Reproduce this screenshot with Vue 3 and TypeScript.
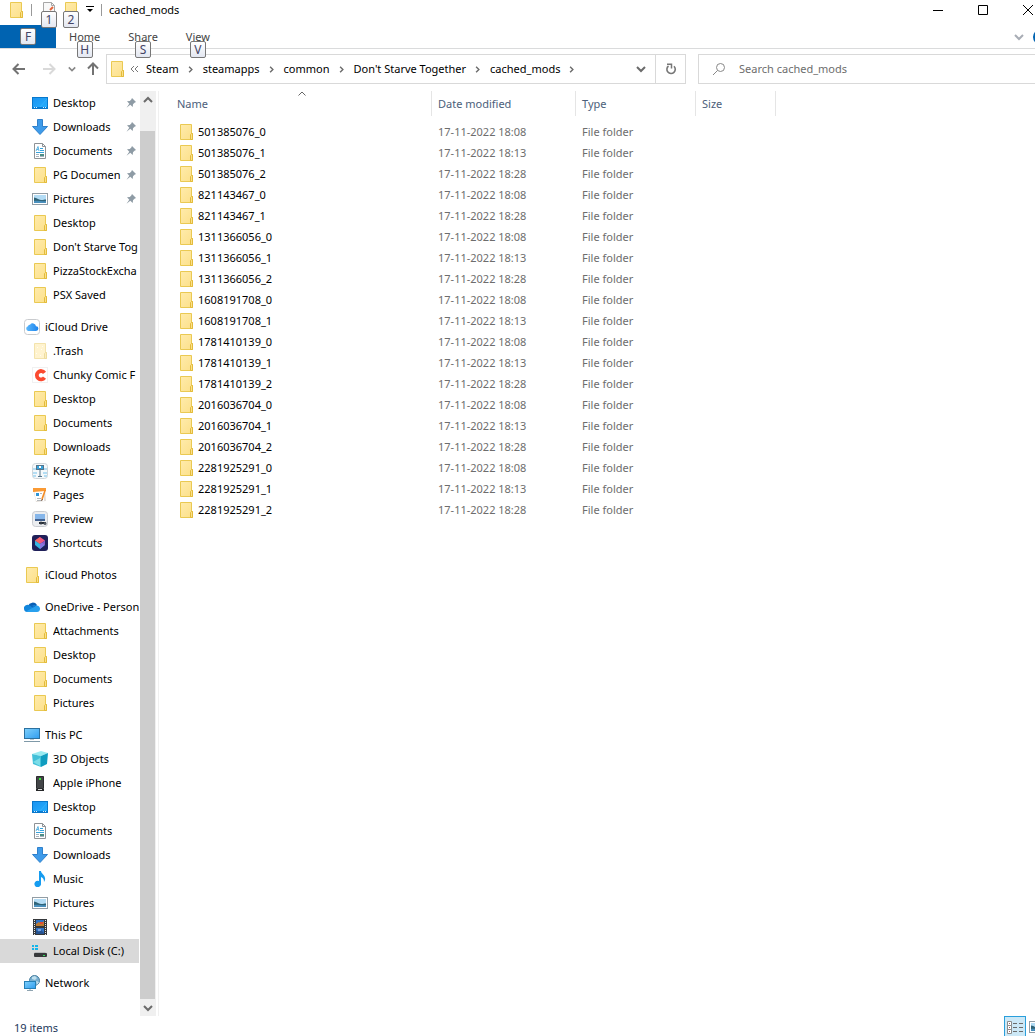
<script setup lang="ts">
interface TreeItem {
  label: string
  icon: string
  root?: boolean
  pinned?: boolean
  selected?: boolean
}

const groups: TreeItem[][] = [
  [
    { label: 'Desktop', icon: 'desktop', pinned: true },
    { label: 'Downloads', icon: 'downloads', pinned: true },
    { label: 'Documents', icon: 'documents', pinned: true },
    { label: 'PG Documen', icon: 'folder', pinned: true },
    { label: 'Pictures', icon: 'pictures', pinned: true },
    { label: 'Desktop', icon: 'folder' },
    { label: "Don't Starve Tog", icon: 'folder' },
    { label: 'PizzaStockExcha', icon: 'folder' },
    { label: 'PSX Saved', icon: 'folder' },
  ],
  [
    { label: 'iCloud Drive', icon: 'icloud', root: true },
    { label: '.Trash', icon: 'trash' },
    { label: 'Chunky Comic F', icon: 'chunky' },
    { label: 'Desktop', icon: 'folder' },
    { label: 'Documents', icon: 'folder' },
    { label: 'Downloads', icon: 'folder' },
    { label: 'Keynote', icon: 'keynote' },
    { label: 'Pages', icon: 'pages' },
    { label: 'Preview', icon: 'preview' },
    { label: 'Shortcuts', icon: 'shortcuts' },
  ],
  [{ label: 'iCloud Photos', icon: 'folder', root: true }],
  [
    { label: 'OneDrive - Person', icon: 'onedrive', root: true },
    { label: 'Attachments', icon: 'folder' },
    { label: 'Desktop', icon: 'folder' },
    { label: 'Documents', icon: 'folder' },
    { label: 'Pictures', icon: 'folder' },
  ],
  [
    { label: 'This PC', icon: 'pc', root: true },
    { label: '3D Objects', icon: 'objects' },
    { label: 'Apple iPhone', icon: 'phone' },
    { label: 'Desktop', icon: 'desktop' },
    { label: 'Documents', icon: 'documents' },
    { label: 'Downloads', icon: 'downloads' },
    { label: 'Music', icon: 'music' },
    { label: 'Pictures', icon: 'pictures' },
    { label: 'Videos', icon: 'videos' },
    { label: 'Local Disk (C:)', icon: 'disk', selected: true },
  ],
  [{ label: 'Network', icon: 'network', root: true }],
]

const tabs = [
  { label: 'Home', key: 'H' },
  { label: 'Share', key: 'S' },
  { label: 'View', key: 'V' },
]

const crumbs = ['Steam', 'steamapps', 'common', "Don't Starve Together", 'cached_mods']

const times = ['18:08', '18:13', '18:28']
const mods: [string, number[]][] = [
  ['501385076', [0, 1, 2]],
  ['821143467', [0, 2]],
  ['1311366056', [0, 1, 2]],
  ['1608191708', [0, 1]],
  ['1781410139', [0, 1, 2]],
  ['2016036704', [0, 1, 2]],
  ['2281925291', [0, 1, 2]],
]
const files = mods.flatMap(([id, slots]) =>
  slots.map((slot, n) => ({ name: `${id}_${n}`, modified: `17-11-2022 ${times[slot]}` })),
)
</script>

<template>
  <div class="explorer">
    <svg class="sprite" aria-hidden="true">
      <defs>
        <linearGradient id="gFolder" x1="0" y1="0" x2="1" y2="1">
          <stop offset="0" stop-color="#ffebab" /><stop offset="1" stop-color="#fce08a" />
        </linearGradient>
        <linearGradient id="gScreen" x1="0" y1="0" x2="1" y2="1">
          <stop offset="0" stop-color="#1a93f0" /><stop offset="1" stop-color="#27b0ff" />
        </linearGradient>
        <linearGradient id="gCloud" x1="0" y1="0" x2="1" y2="0">
          <stop offset="0" stop-color="#5cb8fb" /><stop offset="1" stop-color="#1b83ee" />
        </linearGradient>
        <linearGradient id="gPc" x1="0" y1="0" x2="1" y2="1">
          <stop offset="0" stop-color="#7fd0fb" /><stop offset="1" stop-color="#2f9df0" />
        </linearGradient>
      </defs>
      <symbol id="folder" viewBox="0 0 16 16">
        <path d="M2.500.5h11v9h1v6h-12z" fill="url(#gFolder)" stroke="#eac952" />
        <path d="M12.500 15.500v-5l1-1h1v6z" fill="#fbe08a" stroke="#e3bb3b" />
      </symbol>
      <symbol id="trash" viewBox="0 0 16 16">
        <path d="M2.500.5h11v9h1v6h-12z" fill="#fff3cf" stroke="#f3e3ac" />
        <path d="M12.500 15.500v-5l1-1h1v6z" fill="#fcedbf" stroke="#eddc9f" />
        <path d="M5 4.500h1M9 6.500h1M4 10.500h1M8 12.500h1M10 3.500h1" stroke="#fffdf0" />
      </symbol>
      <symbol id="desktop" viewBox="0 0 16 16">
        <rect x=".5" y="2.500" width="15" height="11" fill="url(#gScreen)" stroke="#0878cc" />
        <path d="M1 12.500h14" stroke="#077bd3" />
        <path d="M2 12.500h1M4 12.500h1M11 12.500h1M13 12.500h1" stroke="#d9f1ff" />
        <path d="M8 12l7-8" stroke="#52c1ff" opacity=".4" />
      </symbol>
      <symbol id="downloads" viewBox="0 0 16 16">
        <path d="M5.500.5h5v7h5L8 15.500.5 7.500h5z" fill="#3e9bea" stroke="#2f80cb" />
      </symbol>
      <symbol id="documents" viewBox="0 0 16 16">
        <path d="M2.500.5h8l3 3v12h-11z" fill="#fff" stroke="#8e9296" />
        <path d="M10.500.5v3h3" fill="none" stroke="#8e9296" />
        <path d="M8 5.500h3M8 7.500h4M4 9.500h8" stroke="#38a3dc" />
        <path d="M4 8l2-4.500L7 8M4.500 6.500h2" stroke="#5db4e2" fill="none" />
        <path d="M4 11.500h3M4 13.500h3M8 13.500h4" stroke="#a4b3bf" />
        <rect x="8" y="11" width="4" height="2" fill="#4e8d84" />
      </symbol>
      <symbol id="pictures" viewBox="0 0 16 16">
        <rect x=".5" y="2.500" width="15" height="11" fill="#fff" stroke="#929da5" />
        <rect x="2" y="4" width="12" height="8" fill="#b3dcf5" />
        <path d="M2 6.500c3 0 4 2.500 7 2.500s3-.5 5-.5V12H2z" fill="#2f6377" />
        <path d="M2 10c4-1 8 1 12 0v2H2z" fill="#4a90bd" />
      </symbol>
      <symbol id="icloud" viewBox="0 0 16 16">
        <rect x=".5" y=".5" width="15" height="15" rx="3" fill="#fff" stroke="#c9cbce" />
        <path d="M4 12a2.500 2.500 0 0 1 0-4.800A2 2 0 0 1 6 5.800 3.300 3.300 0 0 1 12 7.200 2.400 2.400 0 0 1 12 12z" fill="url(#gCloud)" />
      </symbol>
      <symbol id="chunky" viewBox="0 0 16 16">
        <rect x=".5" y=".5" width="15" height="15" fill="#fff" stroke="#f1f1f1" />
        <path d="M12.500 5.800A4.200 4.200 0 1 0 12.500 10.600" fill="none" stroke="#fb4a30" stroke-width="3.800" />
      </symbol>
      <symbol id="keynote" viewBox="0 0 16 16">
        <rect x=".5" y=".5" width="15" height="15" rx="3" fill="#f5f9fb" stroke="#cfd5d9" />
        <path d="M1 6h3M1 10h4M1 13h3M12 6h3M11 10h4M12 13h3" stroke="#b4ddf3" stroke-width="2" />
        <rect x="4.500" y="2.500" width="7" height="4" fill="#35a4de" stroke="#57748a" />
        <path d="M8 3v10M6 13.500h4" stroke="#54748a" />
        <rect x="7" y="3" width="2" height="2" fill="#fff" />
      </symbol>
      <symbol id="pages" viewBox="0 0 16 16">
        <path d="M1 2h12l1 12-10 1z" fill="#e3ded9" />
        <path d="M2 3h10v11H4z" fill="#fff" />
        <path d="M1 1h13v3L1 5z" fill="#fa9a34" />
        <path d="M4 6h3v3H4z" fill="#3095d5" />
        <path d="M5 11.500h4M5 13.500h4M8 6.500h2" stroke="#b3b7ba" />
        <path d="M14 3L11 12l-1.500 1.500V11l3-8z" fill="#f38b24" />
        <path d="M9.500 14l1-2" stroke="#6c5446" />
      </symbol>
      <symbol id="preview" viewBox="0 0 16 16">
        <rect x=".5" y=".5" width="15" height="15" rx="3" fill="#ebedf0" stroke="#c8cbd0" />
        <rect x="3" y="3" width="10" height="6" fill="#86b6ea" />
        <path d="M3 8h10v2H3z" fill="#42618f" />
        <path d="M7 11h7v2H7z" fill="#20262e" />
        <circle cx="9" cy="12" r="1.500" fill="#333a43" /><circle cx="13" cy="12.500" r="1.500" fill="#555c65" />
      </symbol>
      <symbol id="shortcuts" viewBox="0 0 16 16">
        <rect width="16" height="16" rx="3" fill="#202059" />
        <path d="M8 2l5 3.500L8 9 3 5.500z" fill="#f1577f" />
        <path d="M3 5.500L8 9l2-1.300L13 10l-5 4-5-4z" fill="#37b6e3" />
        <path d="M8 9l5-3.500v4L8 14z" fill="#9a67dd" opacity=".85" />
        <path d="M3 5.500l5-3.500v7z" fill="#fb6c5c" opacity=".7" />
      </symbol>
      <symbol id="onedrive" viewBox="0 0 16 16">
        <path d="M4 7a5 5 0 0 1 9-1l-3 4-7-1z" fill="#0a5fb5" />
        <path d="M0 10a3.600 3.600 0 0 1 6-3.300L13 11l-3 2H3.500A3.400 3.400 0 0 1 0 10z" fill="#1286dc" />
        <path d="M2 12.500L10 8l2.500-1.500A3.300 3.300 0 0 1 16 10a3.200 3.200 0 0 1-3 3H4z" fill="#28a0ee" />
        <path d="M4 7c2-1 4 0 6 1l2-1.500c-2-1-3 0-3 0z" fill="#1480d6" />
      </symbol>
      <symbol id="pc" viewBox="0 0 16 16">
        <rect x=".5" y="1.500" width="15" height="10" fill="url(#gPc)" stroke="#2c719f" />
        <path d="M0 14.500h16" stroke="#7f99a8" />
        <path d="M6 12.500h4" stroke="#b9cad4" />
      </symbol>
      <symbol id="objects" viewBox="0 0 16 16">
        <path d="M0 3l9-3 7 2-7 3z" fill="#9aebf1" />
        <path d="M0 3l9 2v11l-8-3z" fill="#42c0d8" />
        <path d="M16 2L9 5v11l6-3z" fill="#109dc0" />
        <path d="M1 11l7-4v8z" fill="#7adce8" />
      </symbol>
      <symbol id="phone" viewBox="0 0 16 16">
        <path d="M4.500 1.500h7v12h-7z" fill="#434548" stroke="#2b2c2e" />
        <path d="M4 14h8v2H4z" fill="#27282a" />
        <path d="M6 14.500h4" stroke="#d8d8d8" />
        <rect x="7" y="3" width="2" height="2" fill="#37ec38" />
      </symbol>
      <symbol id="music" viewBox="0 0 16 16">
        <path d="M7 0h2c0 3 5 4 4 9l-1 2c0-3-1-4-3-5v6.500A3.300 3.200 0 1 1 7 10z" fill="#159cf0" />
      </symbol>
      <symbol id="videos" viewBox="0 0 16 16">
        <rect x="1" width="14" height="16" fill="#35383b" />
        <path d="M2.500 1v15M13.500 1v15" stroke="#e6e6e6" stroke-dasharray="1 1" />
        <rect x="4" y="1" width="8" height="6" fill="#3172c3" /><rect x="4" y="9" width="8" height="6" fill="#3172c3" />
        <path d="M4 5l3-2 2 2 3-3v5H4z" fill="#bd7a30" /><path d="M4 11l3 2 2-2 3 3v1H4z" fill="#26528f" />
        <path d="M8 3h3v2H8z" fill="#e24931" /><path d="M6 10h3v2H6z" fill="#7ca3d7" />
      </symbol>
      <symbol id="disk" viewBox="0 0 16 16">
        <path d="M0 2h2v2H0zM3 2h3v2H3zM0 5h2v2H0zM3 5h3v2H3z" fill="#13b5ea" />
        <path d="M3 9h10l2 2H1.500z" fill="#b8babc" />
        <rect x="2" y="10" width="13" height="4" rx="1" fill="#37393b" />
        <path d="M11 12.500h2" stroke="#34e05c" />
      </symbol>
      <symbol id="network" viewBox="0 0 16 16">
        <circle cx="10.500" cy="5.500" r="5" fill="#78afd1" stroke="#487e9e" />
        <path d="M8 2l3-1 2 2-2 2-3-1zM12 6l3 1-2 3z" fill="#c0e0ee" />
        <rect x=".5" y="6.500" width="11" height="7" fill="url(#gPc)" stroke="#2580b6" />
        <path d="M3 15.500h6M6 14v1" stroke="#8fa4b1" />
      </symbol>
      <symbol id="pin" viewBox="0 0 10 10">
        <path d="M6 0l4 4-1.500.7L7 6.200 6.700 9 4.300 6.700.500 9.700 3.300 5.700 1 3.300 3.800 3 5.300 1.500z" fill="#8e9ba5" />
      </symbol>
      <symbol id="page" viewBox="0 0 16 16">
        <path d="M2.500.5h8l3 3v12h-11z" fill="#f8f8f8" stroke="#a7a7a7" />
        <path d="M10.500.5v3h3" fill="none" stroke="#a7a7a7" />
        <path d="M9 8l3-3" stroke="#e5653b" stroke-width="2" fill="none" />
      </symbol>
      <symbol id="chevron" viewBox="0 0 10 10">
        <path d="M1 3l4 4 4-4" fill="none" stroke="currentColor" stroke-width="2" />
      </symbol>
    </svg>

    <header class="titlebar">
      <svg class="ic"><use href="#folder" /></svg>
      <span class="bar"></span>
      <button class="quick" aria-label="Properties"><svg class="ic"><use href="#page" /></svg><kbd>1</kbd></button>
      <button class="quick" aria-label="New folder"><svg class="ic"><use href="#folder" /></svg><kbd>2</kbd></button>
      <button class="more" aria-label="Customize Quick Access Toolbar">
        <svg width="8" height="7" viewBox="0 0 8 7"><path d="M0 .5h8" stroke="#000" /><path d="M1 3h6L4 6z" /></svg>
      </button>
      <span class="bar"></span>
      <h1>cached_mods</h1>
      <div class="controls">
        <button aria-label="Minimize"><svg width="10" height="10"><path d="M0 5.500h10" stroke="#000" /></svg></button>
        <button aria-label="Maximize"><svg width="10" height="10"><path d="M.5.5h9v9h-9z" fill="none" stroke="#000" /></svg></button>
        <button aria-label="Close"><svg width="10" height="10"><path d="M0 0l10 10M10 0L0 10" stroke="#000" /></svg></button>
      </div>
    </header>

    <div class="ribbon">
      <button class="file" aria-label="File"><kbd>F</kbd></button>
      <button v-for="t in tabs" :key="t.key" class="tab">{{ t.label }}<kbd>{{ t.key }}</kbd></button>
      <div class="ribbon-end">
        <button aria-label="Expand the Ribbon"><svg class="chev light"><use href="#chevron" /></svg></button>
        <button class="help" aria-label="Help"></button>
      </div>
    </div>

    <div class="navbar">
      <button aria-label="Back"><svg width="14" height="14" viewBox="0 0 14 14"><path d="M13 7H2M6.500 2L1.500 7l5 5" /></svg></button>
      <button class="off" aria-label="Forward"><svg width="14" height="14" viewBox="0 0 14 14"><path d="M1 7h11M7.500 2l5 5-5 5" /></svg></button>
      <button class="recent" aria-label="Recent locations"><svg class="chev small"><use href="#chevron" /></svg></button>
      <button class="up" aria-label="Up"><svg width="14" height="14" viewBox="0 0 14 14"><path d="M7 13V2M2 6.500l5-5 5 5" /></svg></button>
      <nav class="address" aria-label="Address">
        <svg class="ic"><use href="#folder" /></svg>
        <svg class="overflow" width="8" height="8" viewBox="0 0 8 8"><path d="M4 1L1 4l3 3M8 1L5 4l3 3" fill="none" stroke="#777" /></svg>
        <template v-for="c in crumbs" :key="c">
          <a href="#">{{ c }}</a>
          <svg class="chev side"><use href="#chevron" /></svg>
        </template>
        <button class="drop" aria-label="Previous locations"><svg class="chev"><use href="#chevron" /></svg></button>
        <button class="refresh" aria-label="Refresh">
          <svg width="12" height="12" viewBox="0 0 12 12"><path d="M3.500 3A4.200 4.200 0 1 0 9 3.300" fill="none" stroke="#777" stroke-width="1.600" /><path d="M2 1.200h4.500v4.300" fill="none" stroke="#777" stroke-width="1.500" /></svg>
        </button>
      </nav>
      <label class="search">
        <svg width="14" height="14" viewBox="0 0 14 14"><circle cx="8.500" cy="5.500" r="4" fill="none" stroke="#888" /><path d="M5.500 8.500L1 13" stroke="#888" /></svg>
        <input type="text" placeholder="Search cached_mods" aria-label="Search cached_mods" />
      </label>
    </div>

    <div class="body">
      <nav class="tree" aria-label="Navigation pane">
        <ul v-for="(g, i) in groups" :key="i">
          <li v-for="(item, j) in g" :key="j">
            <a href="#" :class="{ root: item.root, selected: item.selected }">
              <svg class="ic"><use :href="'#' + item.icon" /></svg>
              <span>{{ item.label }}</span>
              <svg v-if="item.pinned" class="pin"><use href="#pin" /></svg>
            </a>
          </li>
        </ul>
      </nav>
      <div class="scroll">
        <button aria-label="Scroll up"><svg class="chev flip"><use href="#chevron" /></svg></button>
        <div class="thumb"></div>
        <button aria-label="Scroll down"><svg class="chev"><use href="#chevron" /></svg></button>
      </div>
      <main>
        <table>
          <thead>
            <tr>
              <th class="c-name">Name<svg class="sort" width="8" height="5" viewBox="0 0 8 5"><path d="M.5 4.500L4 1l3.500 3.500" fill="none" stroke="#666" /></svg></th>
              <th class="c-date">Date modified</th>
              <th class="c-type">Type</th>
              <th class="c-size">Size</th>
            </tr>
          </thead>
          <tbody>
            <tr v-for="f in files" :key="f.name">
              <td><a href="#"><svg class="ic"><use href="#folder" /></svg><span>{{ f.name }}</span></a></td>
              <td>{{ f.modified }}</td>
              <td>File folder</td>
              <td></td>
            </tr>
          </tbody>
        </table>
      </main>
    </div>

    <footer>
      <span class="count">19 items</span>
      <div class="views">
        <button class="on" aria-label="Details view">
          <svg width="16" height="15" viewBox="0 0 16 15">
            <path d="M.5 1.500h4v4h-4zM.5 5.500h4v4h-4zM.5 9.500h4v4h-4z" fill="#fff" stroke="#8c8c8c" />
            <path d="M2 3.500h1M2 7.500h1M2 11.500h1" stroke="#a06060" />
            <path d="M6 3.500h4M12 3.500h4M6 7.500h4M12 7.500h4M6 11.500h4M12 11.500h4" stroke="#6b6b6b" />
          </svg>
        </button>
        <button aria-label="Large icons view"><svg class="ic"><use href="#pictures" /></svg></button>
      </div>
    </footer>
  </div>
</template>

<style>
body {
  margin: 0;
}
</style>

<style scoped>
.explorer {
  height: 100vh;
  display: flex;
  flex-direction: column;
  overflow: hidden;
  background: #fff;
  color: #000;
  font: 11px/16px "Noto Sans", sans-serif;
}
* {
  box-sizing: border-box;
}
.sprite {
  position: absolute;
  width: 0;
  height: 0;
}
button {
  padding: 0;
  border: 0;
  background: none;
  font: inherit;
  color: inherit;
  display: flex;
  align-items: center;
  justify-content: center;
}
a {
  color: inherit;
  text-decoration: none;
}
.ic {
  width: 16px;
  height: 16px;
  flex: none;
}
.chev {
  width: 10px;
  height: 10px;
  flex: none;
  color: #6b6b6b;
}
.chev.small {
  width: 8px;
  height: 8px;
  color: #888;
}
.chev.light {
  color: #a8adb5;
}
.chev.flip {
  transform: rotate(180deg);
}
.chev.side {
  width: 7px;
  height: 7px;
  margin: 0 9px 0 8px;
  transform: rotate(-90deg);
}
kbd {
  position: absolute;
  z-index: 1;
  left: calc(50% - 8px);
  width: 16px;
  height: 17px;
  border: 1px solid #777;
  border-radius: 2px;
  background: linear-gradient(#fff, #e3e7f1);
  color: #444466;
  font: 12px/15px "Noto Sans", sans-serif;
  text-align: center;
}
.titlebar {
  display: flex;
  align-items: center;
  height: 25px;
  padding: 0 0 6px 8px;
  flex: none;
}
.bar {
  width: 1px;
  height: 12px;
  margin: 0 9px 0 7px;
  background: #999;
}
.quick {
  position: relative;
  width: 22px;
  justify-content: flex-start;
}
.quick kbd {
  top: 9px;
  left: 0;
}
.more {
  width: 9px;
}
h1 {
  margin: 0 0 0 -2px;
  font-size: 11px;
  font-weight: 400;
}
.controls {
  display: flex;
  margin-left: auto;
  margin-right: -15px;
}
.controls button {
  width: 45px;
}
.ribbon {
  display: flex;
  height: 24px;
  border-bottom: 1px solid #dadbdc;
  color: #444;
  flex: none;
}
.file,
.tab {
  position: relative;
}
.tab {
  padding: 0 13px;
  margin-right: 2px;
}
.file {
  width: 56px;
  background: #0063b1;
}
.file kbd {
  top: 3px;
}
.tab kbd {
  top: 16px;
}
.ribbon-end {
  display: flex;
  align-items: center;
  margin-left: auto;
  margin-right: -14px;
  gap: 9px;
}
.help {
  width: 16px;
  height: 16px;
  border-radius: 8px;
  background: #0063b1;
}
.navbar {
  display: flex;
  height: 42px;
  padding: 5px 0 7px 12px;
  flex: none;
}
.navbar > button {
  width: 30px;
  justify-content: flex-start;
}
.navbar > button path {
  fill: none;
  stroke: #737373;
  stroke-width: 2;
}
.navbar > button.off path {
  stroke: #d9d9d9;
}
.navbar > .recent {
  width: 14px;
  margin-left: -4px;
}
.navbar > .up {
  width: 20px;
  margin-left: 4px;
}
.address {
  display: flex;
  align-items: center;
  width: 580px;
  border: 1px solid #d9d9d9;
  padding-left: 2px;
}
.overflow {
  margin: 0 8px 0 5px;
}
.drop {
  margin-left: auto;
  width: 29px;
  height: 28px;
}
.refresh {
  width: 30px;
  height: 28px;
  border-left: 1px solid #d9d9d9;
}
.search {
  flex: 1;
  display: flex;
  align-items: center;
  gap: 13px;
  margin-left: 12px;
  padding-left: 13px;
  border: 1px solid #d9d9d9;
  border-right: 0;
}
.search input {
  flex: 1;
  border: 0;
  padding: 0;
  outline: 0;
  font: inherit;
}
.search input::placeholder {
  color: #6d6d6d;
  opacity: 1;
}
.body {
  flex: 1;
  min-height: 0;
  display: flex;
}
.tree {
  width: 139px;
  overflow: hidden;
  flex: none;
}
ul {
  list-style: none;
  margin: 0 0 8px;
  padding: 0;
}
.tree a {
  display: flex;
  align-items: center;
  height: 24px;
  padding-left: 32px;
}
.tree a.root {
  padding-left: 24px;
}
.tree a.selected {
  background: #d9d9d9;
}
.tree span {
  flex: 1;
  margin-left: 5px;
  overflow: hidden;
  white-space: nowrap;
}
.pin {
  width: 10px;
  height: 10px;
  flex: none;
  margin: 0 3px;
}
.scroll {
  width: 16px;
  margin-left: 1px;
  background: #f0f0f0;
  display: flex;
  flex-direction: column;
  flex: none;
}
.scroll button {
  width: 15px;
  height: 17px;
}
.thumb {
  flex: 1;
  width: 15px;
  margin-top: 23px;
  background: #cdcdcd;
}
main {
  flex: 1;
  margin-left: 2px;
  border-left: 1px solid #f0f0f0;
}
table {
  border-collapse: separate;
  border-spacing: 0;
  table-layout: fixed;
  width: 617px;
}
th {
  position: relative;
  height: 25px;
  padding: 0 0 0 6px;
  border-right: 1px solid #e5e5e5;
  color: #4c607a;
  font-weight: 400;
  text-align: left;
}
th.c-name {
  width: 273px;
  padding-left: 18px;
}
th.c-date {
  width: 144px;
}
th.c-type {
  width: 120px;
}
th.c-size {
  width: 80px;
}
.sort {
  position: absolute;
  top: 0;
  right: 125px;
}
tbody::before {
  content: '';
  display: block;
  height: 6px;
}
td {
  height: 21px;
  padding: 0 0 0 6px;
  color: #6d6d6d;
  line-height: 20px;
  vertical-align: top;
}
td:first-child {
  padding-left: 19px;
  color: #000;
}
td a {
  display: flex;
  align-items: center;
  gap: 4px;
  height: 20px;
}
footer {
  display: flex;
  height: 20px;
  padding-left: 14px;
  flex: none;
  color: #1e395b;
}
.count {
  padding-top: 4px;
}
.views {
  display: flex;
  margin-left: auto;
  margin-right: -13px;
}
.views button {
  width: 22px;
  height: 22px;
  overflow: hidden;
}
.views button.on {
  border: 1px solid #2a9fdc;
  background: #cce8f6;
}
</style>
